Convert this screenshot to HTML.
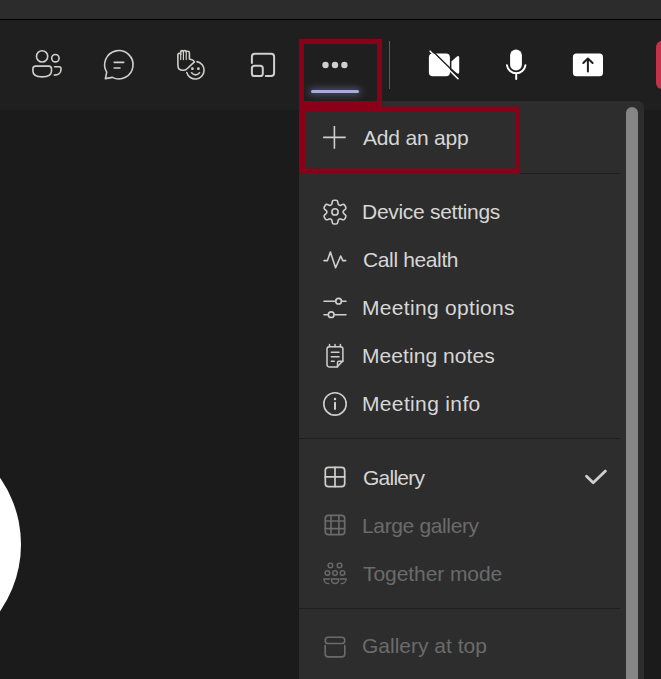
<!DOCTYPE html>
<html>
<head>
<meta charset="utf-8">
<style>
html,body{margin:0;padding:0;}
body{width:661px;height:679px;overflow:hidden;position:relative;background:#1b1b1b;font-family:"Liberation Sans",sans-serif;}
.abs{position:absolute;}
#topstrip{left:0;top:0;width:661px;height:19px;background:#2c2c2c;}
#topline{left:0;top:19px;width:661px;height:1px;background:#000;}
#toolbar{left:0;top:20px;width:661px;height:90px;background:#1f1f1f;}
#avatar{left:-212px;top:427.75px;width:233.4px;height:233.4px;border-radius:50%;background:#fff;}
#endcall{left:656px;top:41px;width:40px;height:48px;border-radius:6px;background:#c4314b;}
#panel{left:299px;top:101px;width:345px;height:600px;background:#2d2d2d;border-radius:0 6px 0 0;}
#thumb{left:626px;top:107px;width:12px;height:600px;border-radius:6px;background:#858585;}
.div{left:299px;width:321px;height:1px;background:#1f1f1f;}
.red{border:5px solid #8a0019;box-sizing:border-box;}
.t{position:absolute;left:362px;font-size:21px;line-height:21px;color:#d6d6d6;white-space:nowrap;}
.dis{color:#6b6b6b;}
svg{position:absolute;left:0;top:0;}
</style>
</head>
<body>
<div id="topstrip" class="abs"></div>
<div id="topline" class="abs"></div>
<div id="toolbar" class="abs"></div>
<div id="avatar" class="abs"></div>
<div id="endcall" class="abs"></div>
<div id="panel" class="abs"></div>
<div id="thumb" class="abs"></div>
<div class="abs div" style="top:173px"></div>
<div class="abs div" style="top:438px"></div>
<div class="abs div" style="top:608px"></div>

<div class="t" style="top:127px;left:363px;letter-spacing:-0.2px">Add an app</div>
<div class="t" style="top:201px;letter-spacing:-0.29px">Device settings</div>
<div class="t" style="top:249px;left:363px;letter-spacing:-0.37px">Call health</div>
<div class="t" style="top:297px;letter-spacing:0.31px">Meeting options</div>
<div class="t" style="top:345px;letter-spacing:0.07px">Meeting notes</div>
<div class="t" style="top:393px;letter-spacing:0.35px">Meeting info</div>
<div class="t" style="top:467px;left:363px;letter-spacing:-0.75px">Gallery</div>
<div class="t dis" style="top:515px;letter-spacing:-0.36px">Large gallery</div>
<div class="t dis" style="top:563px;left:363px;letter-spacing:-0.07px">Together mode</div>
<div class="t dis" style="top:635px">Gallery at top</div>

<svg width="661" height="679" viewBox="0 0 661 679">
<defs>
<filter id="glow" x="-50%" y="-600%" width="200%" height="1300%"><feGaussianBlur stdDeviation="3.5"/></filter>
</defs>
<!-- toolbar icons -->
<g fill="none" stroke="#d0cfcd" stroke-width="1.6" stroke-linecap="round" stroke-linejoin="round">
  <!-- people -->
  <circle cx="42.1" cy="56.4" r="5.6"/>
  <circle cx="55.4" cy="58.2" r="3.7"/>
  <path d="M35.6 66.1H48.8Q51.5 66.1 51.5 68.8V71C51.5 74.9 47.5 76.9 42.2 76.9C36.9 76.9 32.9 74.9 32.9 71V68.8Q32.9 66.1 35.6 66.1Z"/>
  <path d="M54.5 66.7H59.2Q61 66.7 61 68.5V69.5C61 72.8 58.3 75.1 54.3 75.1"/>
  <!-- chat -->
  <path d="M112.4 77.4A14.2 14.2 0 1 0 106.7 72.1L105.4 78.6Z"/>
  <path d="M114.3 62.3H123.7M114.3 68H119.9" stroke-width="1.7"/>
  <!-- raise hand -->
  <path d="M177.9 65V54.6Q177.9 53.2 179.3 53.2Q180.7 53.2 180.7 54.6V52Q180.7 50.6 182.05 50.6Q183.4 50.6 183.4 52Q183.4 50.5 184.8 50.5Q186.2 50.5 186.2 52Q186.2 51.2 187.8 51.2Q189.4 51.2 189.4 52.8V59.1L191.8 59.8Q193.6 60.3 194.4 61.8L186.8 69Q185.5 70.3 183 70.3Q177.9 70.3 177.9 65.2Z"/>
  <path d="M180.7 54.6V59.6M183.4 52V59.6M186.2 52V59.6" stroke-width="1.2"/>
  <path d="M197 61.6A8.8 8.8 0 1 1 186.8 72.6"/>
  <path d="M191.6 72.8Q195.6 77 199.6 72.8"/>
  <!-- view -->
  <path d="M251.9 63V56.8Q251.9 53.8 254.9 53.8H271.1Q274.1 53.8 274.1 56.8V73Q274.1 76 271.1 76H265.8" stroke-width="2"/>
  <rect x="251.9" y="65.7" width="10.9" height="10.3" rx="2.6" stroke-width="2"/>
</g>
<g fill="#d0cfcd">
  <circle cx="192.4" cy="68.7" r="1.4"/>
  <circle cx="198.4" cy="68.7" r="1.4"/>
  <circle cx="325.5" cy="65" r="3.2"/>
  <circle cx="335" cy="65" r="3.2"/>
  <circle cx="344.4" cy="65" r="3.2"/>
</g>
<rect x="309" y="88.5" width="52" height="6" rx="3" fill="#9da0f0" filter="url(#glow)" opacity="0.42"/>
<rect x="311" y="90" width="48" height="3" rx="1.5" fill="#aaaae2"/>
<rect x="389" y="41" width="1" height="48" fill="#5d5d5d"/>
<!-- camera off -->
<g fill="#fff">
  <rect x="428.9" y="53.5" width="21" height="22.7" rx="3.8"/>
  <path d="M451.4 61.5L456.3 57Q459.2 54.6 459.2 57.8V72Q459.2 75.2 456.3 72.8L451.4 68.7Z"/>
</g>
<path d="M430.5 49.1L460.5 78.5" stroke="#1f1f1f" stroke-width="1.4"/>
<path d="M430.1 51.2L458 78.7" stroke="#fff" stroke-width="1.6" stroke-linecap="round"/>
<!-- mic -->
<rect x="510.1" y="49.6" width="11.8" height="21" rx="5.9" fill="#fff"/>
<path d="M507 65.3A9.3 9.3 0 0 0 525.4 65.3M516.2 73.5V79" fill="none" stroke="#fff" stroke-width="2" stroke-linecap="round"/>
<!-- share -->
<rect x="572.9" y="53.6" width="30.1" height="22.7" rx="3.6" fill="#fff"/>
<path d="M587.9 71.4V59M583.3 63L587.9 58.5L592.6 63" fill="none" stroke="#1f1f1f" stroke-width="2" stroke-linecap="round" stroke-linejoin="round"/>

<!-- red boxes -->
<rect x="301.5" y="41.5" width="78" height="63" fill="none" stroke="#8a0019" stroke-width="5"/>
<rect x="302.5" y="109.5" width="215" height="62" fill="none" stroke="#8a0019" stroke-width="5"/>

<!-- menu icons -->
<g fill="none" stroke="#d0cfcd" stroke-width="1.6" stroke-linecap="round" stroke-linejoin="round">
  <path d="M323.1 137.4H345.7M334.4 126.1V148.8" stroke-linecap="butt"/>
  <path d="M330.93 205.05Q331.80 204.55 331.95 203.57L332.23 201.84Q332.48 200.26 334.08 200.26L335.92 200.26Q337.52 200.26 337.77 201.84L338.05 203.57Q338.20 204.55 339.07 205.05L339.07 205.05Q339.93 205.55 340.86 205.20L342.50 204.57Q343.99 204.00 344.79 205.39L345.71 206.98Q346.51 208.36 345.27 209.37L343.91 210.47Q343.14 211.10 343.14 212.10L343.14 212.10Q343.14 213.10 343.91 213.73L345.27 214.83Q346.51 215.84 345.71 217.22L344.79 218.81Q343.99 220.20 342.50 219.63L340.86 219.00Q339.93 218.65 339.07 219.15L339.07 219.15Q338.20 219.65 338.05 220.63L337.77 222.36Q337.52 223.94 335.92 223.94L334.08 223.94Q332.48 223.94 332.23 222.36L331.95 220.63Q331.80 219.65 330.93 219.15L330.93 219.15Q330.07 218.65 329.14 219.00L327.50 219.63Q326.01 220.20 325.21 218.81L324.29 217.22Q323.49 215.84 324.73 214.83L326.09 213.73Q326.86 213.10 326.86 212.10L326.86 212.10Q326.86 211.10 326.09 210.47L324.73 209.37Q323.49 208.36 324.29 206.98L325.21 205.39Q326.01 204.00 327.50 204.57L329.14 205.20Q330.07 205.55 330.93 205.05Z"/>
  <circle cx="335" cy="211.9" r="3.1"/>
  <path d="M324 260.6H327.4L330.4 252.1L335.6 267.8L340.7 256L342.8 260.6H345.7"/>
  <path d="M324 301.2H335.7M341.5 301.2H346M324 314.7H328.3M334.1 314.7H346"/>
  <circle cx="338.6" cy="301.2" r="2.85"/>
  <circle cx="331.2" cy="314.7" r="2.85"/>
  <path d="M327 349Q327 346.7 329.3 346.7H340.6Q342.9 346.7 342.9 349V361L337 366.9H329.3Q327 366.9 327 364.6Z" stroke-width="1.5"/>
  <path d="M342.9 361.3H339Q337.5 361.3 337.5 362.8V366.9" stroke-width="1.5"/>
  <path d="M329.5 344.4V346.7M335 344.4V346.7M340.4 344.4V346.7M331.3 352.3H339M331.3 356.8H339M331.3 361.2H334.2" stroke-width="1.5"/>
  <circle cx="335" cy="403.9" r="11.2"/>
  <path d="M335 402.8V409" stroke-width="2"/>
  <rect x="325.3" y="467.3" width="19.4" height="19.3" rx="3.2" stroke-width="1.7"/>
  <path d="M335 467.3V486.6M325.3 476.9H344.7" stroke-width="1.7"/>
  <path d="M586.5 476.2L593.2 482.7L605.4 471.1" stroke-width="2.8"/>
</g>
<g fill="#d0cfcd"><circle cx="335" cy="398.9" r="1.25"/></g>
<g fill="none" stroke="#6b6b6b" stroke-width="1.6" stroke-linecap="round" stroke-linejoin="round">
  <rect x="325.3" y="515.3" width="19.4" height="19.3" rx="3.2" stroke-width="1.7"/>
  <path d="M331 515.3V534.6M338.9 515.3V534.6M325.3 521H344.7M325.3 528.6H344.7" stroke-width="1.6"/>
  <circle cx="330.4" cy="565.4" r="2.3" stroke-width="1.4"/>
  <circle cx="339.5" cy="565.4" r="2.3" stroke-width="1.4"/>
  <circle cx="327.4" cy="572.9" r="2.3" stroke-width="1.4"/>
  <circle cx="335" cy="572.9" r="2.3" stroke-width="1.4"/>
  <circle cx="342.5" cy="572.9" r="2.3" stroke-width="1.4"/>
  <path d="M331.4 579H338.7V579.8A3.65 3.65 0 0 1 331.4 579.8Z" stroke-width="1.4"/>
  <path d="M329.5 579H323.9V579.5A4.5 4.5 0 0 0 328.6 583.5" stroke-width="1.4"/>
  <path d="M340.5 579H346.1V579.5A4.5 4.5 0 0 1 341.4 583.5" stroke-width="1.4"/>
  <rect x="325.2" y="637.3" width="19.6" height="6.2" rx="3.1" stroke-width="1.6"/>
  <path d="M325.2 645.6V653.8Q325.2 656.9 328.3 656.9H341.7Q344.8 656.9 344.8 653.8V645.6" stroke-width="1.6"/>
</g>
</svg>
</body>
</html>
